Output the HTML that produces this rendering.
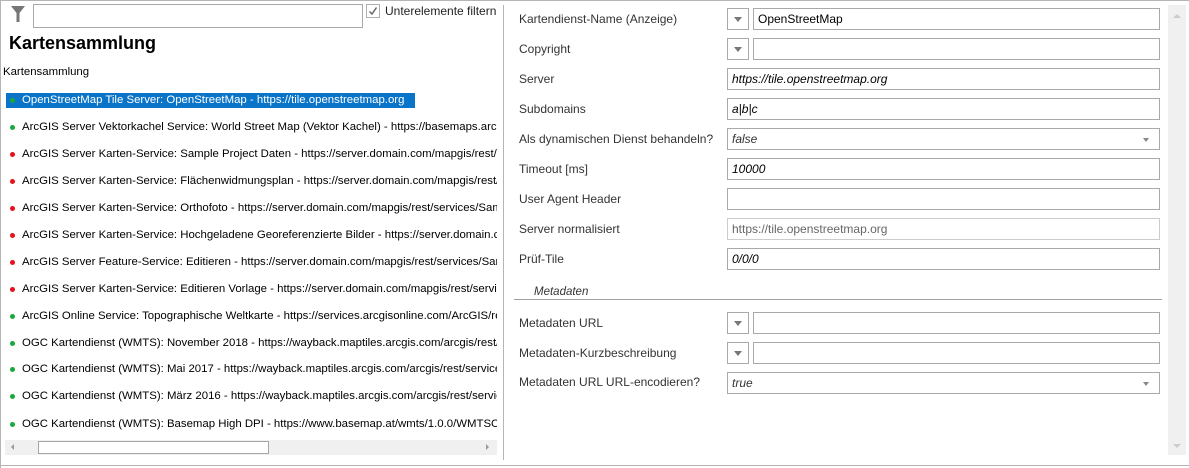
<!DOCTYPE html>
<html><head><meta charset="utf-8"><style>
*{margin:0;padding:0;box-sizing:border-box}
body{width:1189px;height:468px;background:#fff;font-family:"Liberation Sans",sans-serif;font-size:12px;color:#000;position:relative;overflow:hidden}
.a{position:absolute}
.item{position:absolute;left:6px;height:15px;line-height:15px;font-size:11.4px;white-space:nowrap;overflow:hidden;width:491px;padding-left:16px}
.item i{position:absolute;left:4px;top:5px;width:5px;height:5px;border-radius:50%}
.g{background:#1aa83c}.r{background:#e8101a}
.lbl{position:absolute;left:519px;font-size:12px;color:#333;line-height:14px}
.box{position:absolute;height:22px;border:1px solid #a9a9a9;background:#fff;font-size:12px;line-height:20px;padding-left:4px;white-space:nowrap}
.it{font-style:italic}
.dd{position:absolute;width:22px;height:22px;border:1px solid #a9a9a9;background:#fff}
.dd:after,.ar:after{content:"";position:absolute;left:6px;top:8px;border-left:4px solid transparent;border-right:4px solid transparent;border-top:5px solid #777}
.ar{position:absolute;right:6px;top:7px;width:10px;height:8px}
.ar:after{left:0;top:2px;border-left:3px solid transparent;border-right:3px solid transparent;border-top:4px solid #888}
</style></head><body>
<div class="a" style="left:0;top:0;width:1189px;height:1px;background:#b5b5b5"></div>
<div class="a" style="left:0;top:0;width:1px;height:468px;background:#b5b5b5"></div>
<div class="a" style="left:0;top:465px;width:1189px;height:1px;background:#b5b5b5"></div>
<div class="a" style="left:503px;top:5px;width:1px;height:455px;background:#b5b5b5"></div>
<svg class="a" style="left:10px;top:5px" width="16" height="18" viewBox="0 0 16 18"><path d="M1 1H15L9.5 8V17H6.5V8Z" fill="#777"/></svg>
<div class="a" style="left:33px;top:4px;width:330px;height:24px;border:1px solid #a9a9a9"></div>
<div class="a" style="left:366px;top:4px;width:14px;height:14px;border:1px solid #b0b0b0"></div>
<svg class="a" style="left:368px;top:6px" width="10" height="10"><path d="M1.5 5.5L4 8L8.5 1.5" stroke="#666" stroke-width="1.5" fill="none"/></svg>
<div class="a" style="left:385px;top:4px;font-size:12px;color:#222">Unterelemente filtern</div>
<div class="a" style="left:9px;top:33px;font-size:18px;font-weight:bold">Kartensammlung</div>
<div class="a" style="left:3px;top:66px;font-size:11.4px">Kartensammlung</div>
<div class="item" style="top:93px;background:#0a74c9;color:#fff;width:409px"><i class="g"></i>OpenStreetMap Tile Server: OpenStreetMap - https://tile.openstreetmap.org</div>
<div class="item" style="top:120px"><i class="g"></i>ArcGIS Server Vektorkachel Service: World Street Map (Vektor Kachel) - https://basemaps.arcgis.com</div>
<div class="item" style="top:147px"><i class="r"></i>ArcGIS Server Karten-Service: Sample Project Daten - https://server.domain.com/mapgis/rest/services</div>
<div class="item" style="top:174px"><i class="r"></i>ArcGIS Server Karten-Service: Flächenwidmungsplan - https://server.domain.com/mapgis/rest/services</div>
<div class="item" style="top:201px"><i class="r"></i>ArcGIS Server Karten-Service: Orthofoto - https://server.domain.com/mapgis/rest/services/Sample</div>
<div class="item" style="top:228px"><i class="r"></i>ArcGIS Server Karten-Service: Hochgeladene Georeferenzierte Bilder - https://server.domain.com/mapgis</div>
<div class="item" style="top:255px"><i class="r"></i>ArcGIS Server Feature-Service: Editieren - https://server.domain.com/mapgis/rest/services/Sample</div>
<div class="item" style="top:282px"><i class="r"></i>ArcGIS Server Karten-Service: Editieren Vorlage - https://server.domain.com/mapgis/rest/services</div>
<div class="item" style="top:309px"><i class="g"></i>ArcGIS Online Service: Topographische Weltkarte - https://services.arcgisonline.com/ArcGIS/rest</div>
<div class="item" style="top:336px"><i class="g"></i>OGC Kartendienst (WMTS): November 2018 - https://wayback.maptiles.arcgis.com/arcgis/rest/services</div>
<div class="item" style="top:362px"><i class="g"></i>OGC Kartendienst (WMTS): Mai 2017 - https://wayback.maptiles.arcgis.com/arcgis/rest/services</div>
<div class="item" style="top:389px"><i class="g"></i>OGC Kartendienst (WMTS): März 2016 - https://wayback.maptiles.arcgis.com/arcgis/rest/services</div>
<div class="item" style="top:417px"><i class="g"></i>OGC Kartendienst (WMTS): Basemap High DPI - https://www.basemap.at/wmts/1.0.0/WMTSCapabilities</div>
<div class="a" style="left:5px;top:440px;width:492px;height:15px;background:#f0f0f0"></div>
<div class="a" style="left:38px;top:441px;width:231px;height:13px;background:#fff;border:1px solid #a6a6a6"></div>
<div class="a" style="left:11px;top:444px;border-top:3px solid transparent;border-bottom:3px solid transparent;border-right:3px solid #999"></div>
<div class="a" style="left:486px;top:444px;border-top:3px solid transparent;border-bottom:3px solid transparent;border-left:3px solid #999"></div>
<div class="a" style="left:1168px;top:5px;width:18px;height:450px;background:#f0f0f0"></div>
<div class="a" style="left:1173px;top:14px;border-left:4px solid transparent;border-right:4px solid transparent;border-bottom:4px solid #ccc"></div>
<div class="a" style="left:1173px;top:444px;border-left:4px solid transparent;border-right:4px solid transparent;border-top:4px solid #ccc"></div>
<div class="lbl" style="top:12px">Kartendienst-Name (Anzeige)</div>
<div class="lbl" style="top:42px">Copyright</div>
<div class="lbl" style="top:72px">Server</div>
<div class="lbl" style="top:102px">Subdomains</div>
<div class="lbl" style="top:132px">Als dynamischen Dienst behandeln?</div>
<div class="lbl" style="top:162px">Timeout [ms]</div>
<div class="lbl" style="top:192px">User Agent Header</div>
<div class="lbl" style="top:222px">Server normalisiert</div>
<div class="lbl" style="top:252px">Prüf-Tile</div>
<div class="lbl it" style="top:285px;left:534px;font-size:11.5px">Metadaten</div>
<div class="a" style="left:514px;top:299px;width:648px;height:1px;background:#a0a0a0"></div>
<div class="lbl" style="top:316px">Metadaten URL</div>
<div class="lbl" style="top:346px">Metadaten-Kurzbeschreibung</div>
<div class="lbl" style="top:375px">Metadaten URL URL-encodieren?</div>
<div class="dd" style="left:727px;top:8px"></div><div class="box" style="left:753px;top:8px;width:407px">OpenStreetMap</div>
<div class="dd" style="left:727px;top:38px"></div><div class="box" style="left:753px;top:38px;width:407px"></div>
<div class="box it" style="left:727px;top:68px;width:433px">https://tile.openstreetmap.org</div>
<div class="box it" style="left:727px;top:98px;width:433px">a|b|c</div>
<div class="box it" style="left:727px;top:128px;width:433px;color:#333">false<span class="ar"></span></div>
<div class="box it" style="left:727px;top:158px;width:433px">10000</div>
<div class="box" style="left:727px;top:188px;width:433px"></div>
<div class="box" style="left:727px;top:218px;width:433px;border-color:#ccc;color:#666">https://tile.openstreetmap.org</div>
<div class="box it" style="left:727px;top:248px;width:433px">0/0/0</div>
<div class="dd" style="left:727px;top:312px"></div><div class="box" style="left:753px;top:312px;width:407px"></div>
<div class="dd" style="left:727px;top:342px"></div><div class="box" style="left:753px;top:342px;width:407px"></div>
<div class="box it" style="left:727px;top:372px;width:433px;color:#333">true<span class="ar"></span></div>
</body></html>
